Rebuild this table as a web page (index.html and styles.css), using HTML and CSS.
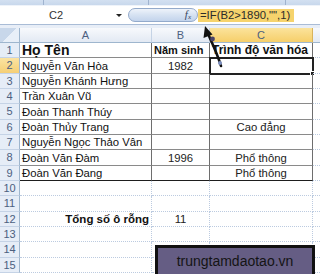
FILE: index.html
```html
<!DOCTYPE html>
<html>
<head>
<meta charset="utf-8">
<link rel="stylesheet" href="styles.css">
</head>
<body>
<div class="app">
  <div class="toolbar"><span class="sep s1"></span><span class="sep s2"></span><span class="sep s3"></span></div>
  <div class="fbar">
    <div class="namebox">C2</div>
    <div class="drop"><span class="tri"></span></div>
    <div class="pill"><span class="fx">f<sub>x</sub></span></div>
    <div class="formula"><span class="hl">=IF(B2&gt;1890,"",1)</span></div>
  </div>
  <div class="gap"></div>
  <div class="sheet">
    <div class="corner"></div><div class="ch">A</div><div class="ch">B</div><div class="ch sel">C</div><div class="ch d"></div>

    <div class="rh">1</div><div class="c t b hA">Họ Tên</div><div class="c t b hB">Năm sinh</div><div class="c t b hC">Trình độ văn hóa</div><div class="c d"></div>
    <div class="rh sel">2</div><div class="c t">Nguyễn Văn Hòa</div><div class="c t n">1982</div><div class="c t active"><span class="handle"></span></div><div class="c d"></div>
    <div class="rh">3</div><div class="c t">Nguyễn Khánh Hưng</div><div class="c t"></div><div class="c t"></div><div class="c d"></div>
    <div class="rh">4</div><div class="c t">Trần Xuân Vũ</div><div class="c t"></div><div class="c t"></div><div class="c d"></div>
    <div class="rh">5</div><div class="c t">Đoàn Thanh Thúy</div><div class="c t"></div><div class="c t"></div><div class="c d"></div>
    <div class="rh">6</div><div class="c t">Đoàn Thủy Trang</div><div class="c t"></div><div class="c t n">Cao đẳng</div><div class="c d"></div>
    <div class="rh">7</div><div class="c t">Nguyễn Ngọc Thảo Vân</div><div class="c t"></div><div class="c t"></div><div class="c d"></div>
    <div class="rh">8</div><div class="c t">Đoàn Văn Đàm</div><div class="c t n">1996</div><div class="c t n">Phổ thông</div><div class="c d"></div>
    <div class="rh">9</div><div class="c t last">Đoàn Văn Đang</div><div class="c t last"></div><div class="c t n last">Phổ thông</div><div class="c d"></div>
    <div class="rh">10</div><div class="c"></div><div class="c"></div><div class="c"></div><div class="c d"></div>
    <div class="rh">11</div><div class="c"></div><div class="c"></div><div class="c"></div><div class="c d"></div>
    <div class="rh">12</div><div class="c b r">Tổng số ô rỗng</div><div class="c n">11</div><div class="c"></div><div class="c d"></div>
    <div class="rh">13</div><div class="c"></div><div class="c"></div><div class="c"></div><div class="c d"></div>
    <div class="rh">14</div><div class="c"></div><div class="c"></div><div class="c"></div><div class="c d"></div>
    <div class="rh">15</div><div class="c"></div><div class="c"></div><div class="c"></div><div class="c d"></div>
  </div>

  <svg class="arrow" width="320" height="274" viewBox="0 0 320 274">
    <path d="M221 66 C218 56 214 47 209 36" stroke="#111" stroke-width="2.6" fill="none" stroke-linecap="round"/>
    <polygon points="205,26 203.5,38 212.5,34.5" fill="#111"/>
    <circle cx="212.5" cy="39" r="2.4" fill="#4a4468"/>
    <circle cx="220" cy="63" r="2" fill="#7d8fbf"/>
  </svg>

  <div class="banner">trungtamdaotao.vn</div>
</div>
</body>
</html>
```
FILE: styles.css
```css
html, body {
  margin: 0;
  padding: 0;
  width: 320px;
  height: 274px;
  overflow: hidden;
  background: #ffffff;
}
.app {
  position: relative;
  width: 320px;
  height: 274px;
  overflow: hidden;
  font-family: "Liberation Sans", Arial, sans-serif;
}
.toolbar {
  position: relative;
  height: 5px;
  background: linear-gradient(#d3e0f1, #c8d8ec);
  border-bottom: 1px solid #eef3fa;
}
.sep {
  position: absolute;
  top: 0;
  width: 1px;
  height: 5px;
  background: #9fb3cf;
}
.s1 { left: 43px; }
.s2 { left: 148px; }
.s3 { left: 285px; }
.fbar {
  display: flex;
  align-items: center;
  height: 19px;
  background: #ffffff;
  border-bottom: 1px solid #a9bcd6;
  box-sizing: border-box;
}
.namebox {
  width: 112px;
  text-align: center;
  font-size: 11px;
  color: #333;
}
.drop {
  width: 14px;
  display: flex;
  justify-content: center;
}
.tri {
  width: 0;
  height: 0;
  border-left: 3px solid transparent;
  border-right: 3px solid transparent;
  border-top: 3px solid #222;
}
.pill {
  margin-left: 2px;
  width: 70px;
  height: 14px;
  box-sizing: border-box;
  border: 1px solid #93aacb;
  border-radius: 7px;
  background: linear-gradient(#eef3fa, #d6e2f2 50%, #c3d4ec);
  display: flex;
  justify-content: flex-end;
  align-items: center;
  padding-right: 6px;
}
.fx {
  font-family: "Liberation Serif", serif;
  font-style: italic;
  font-size: 11px;
  color: #39475e;
  line-height: 10px;
}
.fx sub {
  font-size: 7px;
  vertical-align: -1px;
}
.formula {
  flex: 1;
  padding-left: 0;
  font-size: 11.3px;
  color: #2b2b2b;
}
.hl {
  display: inline-block;
  background: #f6d36c;
  padding: 0 4px 0 2px;
  line-height: 13px;
}
.gap {
  height: 3px;
  background: #e8eef7;
}
.sheet {
  display: grid;
  grid-template-columns: 20px 132px 58px 103px 1fr;
  grid-template-rows: 15px repeat(15, 15.333px);
}
.corner {
  box-sizing: border-box;
  border-right: 1px solid #9eb6ce;
  border-bottom: 1px solid #9eb6ce;
  background: linear-gradient(135deg, #c8d7ea 50%, #e8eff8 50%);
}
.ch {
  box-sizing: border-box;
  border-right: 1px solid #c5d3e5;
  border-bottom: 1px solid #9eb6ce;
  background: linear-gradient(#f7f9fc, #e2e9f3);
  font-size: 11px;
  color: #4c607f;
  text-align: center;
  line-height: 14px;
}
.ch.sel {
  background: linear-gradient(#fbe39c, #f6cf6a);
  border-right-color: #d9b35a;
}
.ch.d { border-right: 0; }
.rh {
  box-sizing: border-box;
  border-right: 1px solid #9eb6ce;
  border-bottom: 1px solid #c5d3e6;
  background: #e6edf7;
  font-size: 11px;
  color: #4c607f;
  display: flex;
  align-items: center;
  justify-content: center;
}
.rh.sel {
  background: linear-gradient(#fbe3a2, #f5cf75);
}
.c {
  position: relative;
  box-sizing: border-box;
  border-right: 1px dotted #bccbe0;
  border-bottom: 1px dotted #bccbe0;
  font-size: 11.3px;
  color: #111;
  padding: 0 2px;
  display: flex;
  align-items: flex-end;
  line-height: 13px;
  white-space: nowrap;
}
.c.d { border-right: 0; }
.c.t {
  border-right: 1px solid #6e6e6e;
  border-bottom: 1px solid #8a8a8a;
}
.c.t.last { border-bottom-color: #1e1e1e; }
.c.b {
  font-weight: bold;
  font-size: 12px;
}
.c.hA { font-size: 14px; line-height: 14px; }
.c.hB { font-size: 11px; }
.c.hC { font-size: 12px; }
.c.r { justify-content: flex-end; font-size: 11.5px; }
.c.n {
  justify-content: center;
  color: #222;
}
.c.active {
  outline: 2px solid #222;
  outline-offset: -1px;
}
.handle {
  position: absolute;
  right: -3px;
  bottom: -3px;
  width: 5px;
  height: 5px;
  background: #222;
  border: 1px solid #fff;
  box-sizing: border-box;
}
.arrow {
  position: absolute;
  left: 0;
  top: 0;
  pointer-events: none;
}
.banner {
  position: absolute;
  left: 155px;
  top: 245px;
  width: 160px;
  height: 40px;
  box-sizing: border-box;
  border: 3px solid #111;
  background: #655d84;
  color: #141414;
  font-size: 14px;
  text-align: center;
  padding-top: 5px;
  line-height: 16px;
}
```
